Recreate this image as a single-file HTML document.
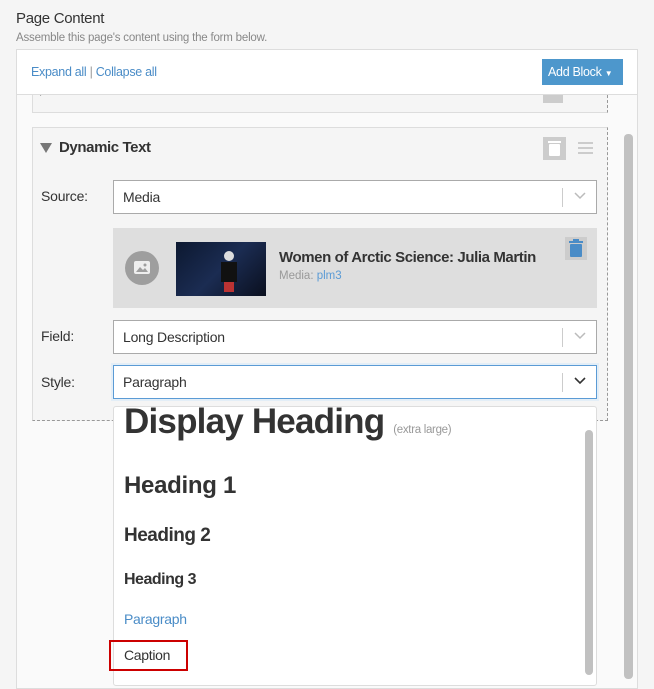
<!DOCTYPE html>
<html><head><style>
*{box-sizing:border-box;margin:0;padding:0}
body{width:654px;height:677px;background:#f5f5f5;font-family:"Liberation Sans",sans-serif;color:#333;position:relative;overflow:hidden}
.a{position:absolute}
.sel{position:absolute;left:113px;width:484px;height:34px;background:#fff;border:1px solid #aaa;font-size:14px;padding:8px 9px;letter-spacing:-.2px}
.sel .sep{position:absolute;right:33px;top:7px;width:1px;height:19px;background:#ccc}
.sel svg{position:absolute;right:10px;top:11px}
.lbl{position:absolute;left:41px;font-size:14px;letter-spacing:-.2px}
.opt{position:absolute;left:124px;font-weight:bold;color:#333;letter-spacing:-.5px}
</style></head><body>
<div class="a" style="left:16px;top:10px;font-size:15px;letter-spacing:-.3px">Page Content</div>
<div class="a" style="left:16px;top:32px;font-size:11.5px;color:#888;letter-spacing:-.2px">Assemble this page's content using the form below.</div>
<div class="a" style="left:16px;top:49px;width:622px;height:640px;background:#fafafa;border:1px solid #ddd"></div>
<!-- media block (cut) -->
<div class="a" style="left:32px;top:80px;width:576px;height:33px;background:#f5f5f5;border:1px solid #ddd;border-right:1px dashed #999"></div>
<div class="a" style="left:40px;top:86px;width:0;height:0;border-top:5px solid transparent;border-bottom:5px solid transparent;border-left:7px solid #888"></div>
<div class="a" style="left:59px;top:82px;font-size:15px;font-weight:bold;color:#444">Media <span style="font-size:12px;font-weight:normal;color:#999">Women of Arctic Science: Julia Martin</span></div>
<div class="a" style="left:543px;top:80px;width:20px;height:23px;background:#ccc"></div>
<div class="a" style="left:578px;top:92px;width:15px;height:2px;background:#ccc"></div>
<!-- dynamic text block -->
<div class="a" style="left:32px;top:127px;width:576px;height:294px;background:#f5f5f5;border:1px solid #ddd;border-right:1px dashed #999;border-bottom:1px dashed #999"></div>
<div class="a" style="left:40px;top:143px;width:0;height:0;border-left:6px solid transparent;border-right:6px solid transparent;border-top:10px solid #777"></div>
<div class="a" style="left:59px;top:139px;font-size:15px;font-weight:bold;letter-spacing:-.4px">Dynamic Text</div>
<div class="a" style="left:543px;top:137px;width:23px;height:23px;background:#ccc"></div>
<svg class="a" style="left:547px;top:140px" width="15" height="17"><rect x="1" y="1" width="13" height="2" fill="#fff"/><rect x="2" y="4" width="11" height="12" rx="1" fill="#fff"/></svg>
<div class="a" style="left:578px;top:142px;width:15px;height:2px;background:#ccc;box-shadow:0 5px #ccc,0 10px #ccc"></div>
<div class="lbl" style="top:188px">Source:</div>
<div class="sel" style="top:180px">Media<div class="sep"></div><svg width="12" height="8"><path d="M1 1l5 5 5-5" stroke="#bbb" stroke-width="1.5" fill="none"/></svg></div>
<div class="a" style="left:113px;top:228px;width:484px;height:80px;background:#dedede"></div>
<div class="a" style="left:125px;top:251px;width:34px;height:34px;border-radius:50%;background:#9e9e9e"></div>
<svg class="a" style="left:133px;top:260px" width="18" height="15"><rect x="1" y="1" width="16" height="13" rx="2" fill="#eee"/><path d="M3 12l4-5 3 3 2-2 3 4z" fill="#9e9e9e"/><circle cx="12" cy="5" r="1.5" fill="#9e9e9e"/></svg>
<div class="a" style="left:176px;top:242px;width:90px;height:54px;background:linear-gradient(135deg,#0c1830,#1b2c52 50%,#0a0f1e)"></div>
<div class="a" style="left:224px;top:251px;width:10px;height:10px;border-radius:50%;background:#ddd"></div>
<div class="a" style="left:221px;top:262px;width:16px;height:20px;background:#111"></div>
<div class="a" style="left:224px;top:282px;width:10px;height:10px;background:#b33"></div>
<div class="a" style="left:279px;top:249px;font-size:15px;font-weight:bold;letter-spacing:-.4px">Women of Arctic Science: Julia Martin</div>
<div class="a" style="left:279px;top:270px;font-size:11.5px;color:#999">Media: <span style="color:#5b9bd5">plm3</span></div>
<div class="a" style="left:565px;top:237px;width:22px;height:23px;background:#ccc"></div>
<svg class="a" style="left:568px;top:239px" width="16" height="19"><rect x="1" y="2" width="14" height="2" fill="#4a8cc7"/><rect x="5" y="0" width="6" height="2" fill="#4a8cc7"/><rect x="2" y="5" width="12" height="13" rx="1" fill="#4a8cc7"/></svg>
<div class="lbl" style="top:328px">Field:</div>
<div class="sel" style="top:320px">Long Description<div class="sep"></div><svg width="12" height="8"><path d="M1 1l5 5 5-5" stroke="#bbb" stroke-width="1.5" fill="none"/></svg></div>
<div class="lbl" style="top:374px">Style:</div>
<div class="sel" style="top:365px;border-color:#5b9bd5;box-shadow:0 0 0 2px #e3eef7">Paragraph<div class="sep"></div><svg width="12" height="8"><path d="M1 1l5 5 5-5" stroke="#333" stroke-width="1.6" fill="none"/></svg></div>
<!-- dropdown -->
<div class="a" style="left:113px;top:406px;width:484px;height:280px;background:#fff;border:1px solid #ddd;border-radius:3px"></div>
<div class="a" style="left:585px;top:430px;width:8px;height:245px;background:#c1c1c1;border-radius:4px"></div>
<div class="opt" style="top:402px;font-size:35px;letter-spacing:-.8px">Display Heading <span style="font-size:11.5px;font-weight:normal;color:#999;letter-spacing:-.3px">(extra large)</span></div>
<div class="opt" style="top:472px;font-size:24px;letter-spacing:-.3px">Heading 1</div>
<div class="opt" style="top:525px;font-size:19px">Heading 2</div>
<div class="opt" style="top:571px;font-size:16px">Heading 3</div>
<div class="a" style="left:124px;top:611px;font-size:14px;color:#4a8cc7;letter-spacing:-.3px">Paragraph</div>
<div class="a" style="left:109px;top:640px;width:79px;height:31px;border:2px solid #c00"></div>
<div class="a" style="left:124px;top:647px;font-size:14px;letter-spacing:-.3px">Caption</div>
<!-- header -->
<div class="a" style="left:17px;top:50px;width:620px;height:45px;background:#fff;border-bottom:1px solid #ddd"></div>
<div class="a" style="left:31px;top:65px;font-size:12.5px;color:#4a8cc7;letter-spacing:-.3px">Expand all <span style="color:#999">|</span> Collapse all</div>
<div class="a" style="left:542px;top:59px;width:81px;height:26px;background:#4d97cc;color:#fff;font-size:12.5px;padding:6px 6px;letter-spacing:-.3px">Add Block <span style="font-size:8px">▼</span></div>
<!-- outer scrollbar -->
<div class="a" style="left:624px;top:134px;width:9px;height:545px;background:#c1c1c1;border-radius:4px"></div>
</body></html>
